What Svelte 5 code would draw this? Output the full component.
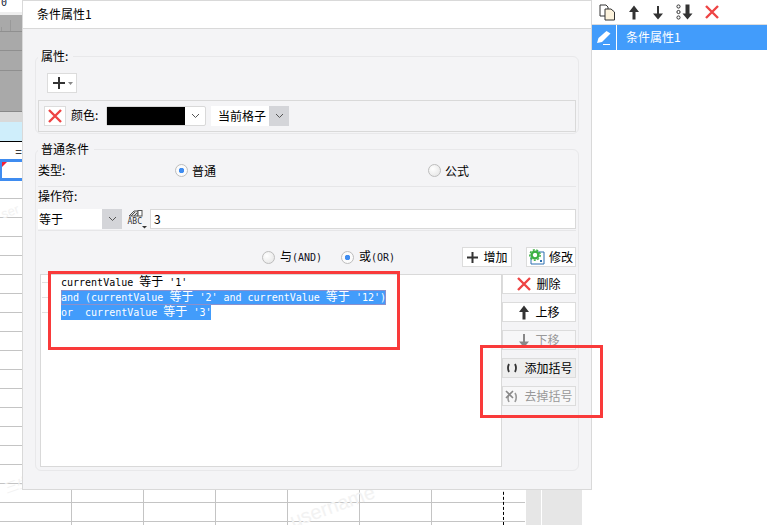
<script>
  let rows = [
    { icon: 'x', label: '删除' },
    { icon: 'up', label: '上移' },
    { icon: 'down', label: '下移', off: true },
    { icon: 'paren', label: '添加括号', hover: true },
    { icon: 'unparen', label: '去掉括号', off: true }
  ];
</script>

{#snippet arrowUp(c)}
  <svg width="12" height="15" viewBox="0 0 12 15"><path d="M6 0.5 L11 7 H7.5 V14.5 H4.5 V7 H1 Z" fill={c} /></svg>
{/snippet}
{#snippet arrowDown(c)}
  <svg width="12" height="15" viewBox="0 0 12 15"><path d="M6 14.5 L11 8.5 H7 V1 H5 V8.5 H1 Z" fill={c} /></svg>
{/snippet}
{#snippet redX(s)}
  <svg width={s} height={s} viewBox="0 0 14 14"><path d="M1 1 L13 13 M13 1 L1 13" stroke="#ee4444" stroke-width="2.4" fill="none" /></svg>
{/snippet}
{#snippet chevron()}
  <svg width="9" height="6" viewBox="0 0 9 6"><path d="M1 1 L4.5 4.5 L8 1" stroke="#555" fill="none" /></svg>
{/snippet}

<div class="page">
  <div class="sheet">
    <div class="s-top">0</div>
    <div class="s-ruler"></div>
    <div class="s-pale"></div>
    <div class="s-blue"></div>
    <div class="s-head">=</div>
    <div class="s-cell"><span class="flag"></span></div>
    <div class="s-grid">
      <div class="cells"></div>
      <div class="cells-b"></div>
      <div class="col-a"></div>
      <div class="col-b"></div>
    </div>
    <span class="mark m1">ser</span>
    <span class="mark m2">三生</span>
    <span class="mark m3">username</span>
  </div>

  <aside class="panel">
    <div class="tools">
      <svg width="17" height="17" viewBox="0 0 17 17">
        <path d="M1 1 H7 L9 3 V12 H1 Z" fill="#fff" stroke="#333" />
        <path d="M6 5 H12 L15.5 8 V16 H6 Z" fill="#fdf3dc" stroke="#333" />
      </svg>
      {@render arrowUp('#333')}
      {@render arrowDown('#333')}
      <svg width="17" height="16" viewBox="0 0 17 16">
        <circle cx="2.5" cy="2.5" r="1.6" fill="none" stroke="#333" />
        <circle cx="2.5" cy="8" r="1.6" fill="none" stroke="#333" />
        <circle cx="2.5" cy="13.5" r="1.6" fill="none" stroke="#333" />
        <path d="M11.5 15.5 L16.5 9.5 H13.5 V0.5 H9.5 V9.5 H6.5 Z" fill="#333" />
      </svg>
      {@render redX(14)}
    </div>
    <div class="picked">
      <span class="pen">
        <svg width="16" height="16" viewBox="0 0 16 16">
          <path d="M1 13 L2.5 8 L10.5 1 L14.5 3.5 L6 12 Z" fill="#fff" />
          <path d="M7 14.5 H14" stroke="#fff" />
        </svg>
      </span>
      <span class="picked-name">条件属性1</span>
    </div>
  </aside>

  <section class="dialog">
    <header class="title">条件属性1</header>
    <div class="body">
      <fieldset class="group">
        <legend>属性:</legend>
        <button class="add-btn">
          <svg width="14" height="14" viewBox="0 0 14 14"><path d="M7 1 V13 M1 7 H13" stroke="#333" stroke-width="2" /></svg>
          <svg width="5" height="3" viewBox="0 0 5 3"><path d="M0 0 H5 L2.5 3 Z" fill="#888" /></svg>
        </button>
        <div class="attr-row">
          <button class="x-btn">{@render redX(14)}</button>
          <span class="attr-label">颜色:</span>
          <div class="color-box">
            <span class="swatch"></span>
            <span class="color-arrow">{@render chevron()}</span>
          </div>
          <div class="select scope">
            <span class="select-text">当前格子</span>
            <span class="select-arrow">{@render chevron()}</span>
          </div>
        </div>
      </fieldset>

      <fieldset class="group second">
        <legend>普通条件</legend>
        <div class="type-row">
          <span>类型:</span>
          <label class="radio"><i class="dot on"></i>普通</label>
          <label class="radio"><i class="dot"></i>公式</label>
        </div>
        <div class="op-label">操作符:</div>
        <div class="op-row">
          <div class="select op">
            <span class="select-text">等于</span>
            <span class="select-arrow">{@render chevron()}</span>
          </div>
          <svg class="abc" width="20" height="20" viewBox="0 0 20 20">
            <path d="M2 7 L7 2 H11 V7 Z" fill="#ddd" stroke="#555" />
            <path d="M4 7 L8 3 M7 7 L10 4" stroke="#555" />
            <rect x="11" y="1.5" width="4" height="5.5" fill="#fff" stroke="#555" />
            <text x="0.5" y="15" class="abc-text">ABC</text>
            <path d="M15 17 H20 L17.5 19.5 Z" fill="#333" />
          </svg>
          <div class="value">3</div>
        </div>
        <div class="logic-row">
          <label class="radio"><i class="dot"></i><span>与<span class="latin">(AND)</span></span></label>
          <label class="radio"><i class="dot on"></i><span>或<span class="latin">(OR)</span></span></label>
          <button class="btn small">
            <svg width="13" height="13" viewBox="0 0 13 13"><path d="M6.5 1 V12 M1 6.5 H12" stroke="#333" stroke-width="2" /></svg>
            增加
          </button>
          <button class="btn small">
            <svg width="16" height="16" viewBox="0 0 16 16">
              <path d="M4 3 H15 V15 H2 V8" fill="none" stroke="#2a6fb0" />
              <circle cx="6" cy="6" r="3.4" fill="none" stroke="#3cb043" stroke-width="2.4" />
              <circle cx="6" cy="6" r="5.2" fill="none" stroke="#3cb043" stroke-width="1.4" stroke-dasharray="2 1.6" />
              <rect x="11" y="11" width="2" height="2" fill="#2a6fb0" />
            </svg>
            修改
          </button>
        </div>
        <div class="list-row">
          <div class="list">
            <div class="line"><span class="tick"></span><span class="txt">currentValue <b>等于</b> '1'</span></div>
            <div class="line"><span class="tick"></span><span class="txt sel outlined">and (currentValue <b>等于</b> '2' and currentValue <b>等于</b> '12') </span></div>
            <div class="line"><span class="tick"></span><span class="txt sel">or  currentValue <b>等于</b> '3' </span></div>
          </div>
          <div class="side">
            {#each rows as r}
              <button class="btn" class:off={r.off} class:hover={r.hover}>
                {#if r.icon === 'x'}
                  {@render redX(14)}
                {:else if r.icon === 'up'}
                  {@render arrowUp('#333')}
                {:else if r.icon === 'down'}
                  {@render arrowDown('#888')}
                {:else if r.icon === 'paren'}
                  <svg width="14" height="12" viewBox="0 0 14 12"><path d="M4 2 Q2 6 4 10 M10 2 Q12 6 10 10" fill="none" stroke="#333" stroke-width="1.8" /></svg>
                {:else}
                  <svg width="14" height="13" viewBox="0 0 14 13">
                    <path d="M10 3 Q12.5 7 10 12 M4 5 Q2 8 4 12" fill="none" stroke="#999" stroke-width="1.6" />
                    <path d="M1 1 L8 8 M8 1 L1 8" stroke="#888" stroke-width="1.6" />
                  </svg>
                {/if}
                {r.label}
              </button>
            {/each}
          </div>
        </div>
      </fieldset>
    </div>
  </section>

  <div class="note note-a"></div>
  <div class="note note-b"></div>
</div>

<style>
  :global(body) {
    margin: 0;
    background: #fff;
  }

  .page {
    position: relative;
    display: flex;
    width: 767px;
    height: 525px;
    overflow: hidden;
    font-family: "Noto Sans CJK SC", "Liberation Sans", sans-serif;
    font-size: 12px;
    color: #000;
  }

  /* spreadsheet behind the dialog */
  .sheet {
    position: relative;
    width: 592px;
    height: 525px;
    overflow: hidden;
    display: flex;
    flex-direction: column;
  }
  .s-top {
    height: 12px;
    font: 10px/6px "DejaVu Sans Mono", monospace;
    padding-left: 1px;
    color: #123;
    border-bottom: 3px solid #eeeeee;
  }
  .s-ruler {
    height: 96px;
    border-bottom: 1px solid #888;
    background:
      linear-gradient(#8f8f8f, #8f8f8f) 0 16px / 100% 1px no-repeat,
      linear-gradient(#8f8f8f, #8f8f8f) 0 35px / 100% 1px no-repeat,
      linear-gradient(#8f8f8f, #8f8f8f) 0 55px / 100% 1px no-repeat,
      linear-gradient(#999, #999) 1px 12px / 1px 4px no-repeat,
      linear-gradient(#999, #999) 10px 5px / 1px 11px no-repeat,
      #a9a9a9;
  }
  .s-pale {
    height: 10px;
    background: #d9d9d9;
  }
  .s-blue {
    height: 19px;
    background: #cfeefb;
  }
  .s-head {
    height: 17px;
    border-top: 1px solid #000;
    width: 22px;
    text-align: right;
    line-height: 17px;
  }
  .s-cell {
    height: 16px;
    width: 590px;
    border: 3px solid #3f8cf0;
    border-width: 3px 2px;
    position: relative;
  }
  .flag {
    position: absolute;
    left: 0;
    top: 0;
    border-top: 5px solid #f2203a;
    border-right: 5px solid transparent;
  }
  .s-grid {
    display: flex;
    flex: 1;
    margin-top: -1px;
  }
  .cells {
    width: 503px;
    flex: none;
    border-right: 1px dashed #000;
    background-image:
      repeating-linear-gradient(to bottom, transparent 0 18px, #c4c4c4 18px 19px),
      repeating-linear-gradient(to right, transparent 0 71px, #c4c4c4 71px 72px);
  }
  .cells-b {
    width: 21px;
    flex: none;
    background-image: repeating-linear-gradient(to bottom, transparent 0 18px, #c4c4c4 18px 19px);
  }
  .col-a {
    width: 15px;
    margin-left: 1px;
    background: #e6e6e6;
  }
  .col-b {
    width: 40px;
    margin-left: 1px;
    background: #e6e6e6;
  }
  .mark {
    position: absolute;
    color: #f2f2f2;
    font-family: "Liberation Sans", sans-serif;
    font-size: 13px;
    transform: rotate(-20deg);
  }
  .m1 { left: 1px; top: 204px; }
  .m2 { left: 5px; top: 476px; }
  .m3 { left: 288px; top: 495px; font-size: 20px; }

  /* right list panel */
  .panel {
    flex: 1;
    background: #fff;
  }
  .tools {
    height: 24px;
    border-bottom: 1px solid #dddddd;
    display: flex;
    align-items: center;
    gap: 12px;
    padding-left: 7px;
  }
  .picked {
    height: 25px;
    display: flex;
    background: #429cfb;
    color: #fff;
  }
  .pen {
    width: 24px;
    border-right: 1px solid #fff;
    display: flex;
    align-items: center;
    justify-content: center;
  }
  .picked-name {
    margin-left: 9px;
    line-height: 24px;
  }

  /* dialog window */
  .dialog {
    position: absolute;
    left: 22px;
    top: 0;
    width: 570px;
    height: 490px;
    box-sizing: border-box;
    border: 1px solid #d9d9d9;
    background: #f4f4f6;
    display: flex;
    flex-direction: column;
  }
  .title {
    height: 27px;
    flex: none;
    background: #fff;
    border-bottom: 1px solid #d9d9d9;
    padding-left: 14px;
    line-height: 26px;
  }
  .body {
    padding: 19px 0 0 12px;
  }

  fieldset.group {
    margin: 0;
    width: 544px;
    box-sizing: border-box;
    padding: 0 2px 1px 2px;
    border: 1px solid #e8e8ea;
    border-radius: 6px;
  }
  .second {
    margin-top: 7px !important;
    padding-bottom: 3px !important;
  }
  legend {
    margin-left: 0;
    padding: 0 5px 0 3px;
    line-height: 16px;
    height: 16px;
  }

  button {
    font: inherit;
    color: inherit;
    margin: 0;
    padding: 0;
  }
  .add-btn {
    display: flex;
    align-items: center;
    justify-content: center;
    gap: 2px;
    width: 30px;
    height: 20px;
    margin: 9px 0 7px 9px;
    background: #fff;
    border: 1px solid #dcdcdc;
  }
  .attr-row {
    height: 32px;
    box-sizing: border-box;
    border: 1px solid #d9d9d9;
    display: flex;
    align-items: center;
    padding-left: 5px;
  }
  .x-btn {
    width: 22px;
    height: 20px;
    background: #fff;
    border: 1px solid #dcdcdc;
    display: flex;
    align-items: center;
    justify-content: center;
  }
  .attr-label {
    margin: 0 0 2px 5px;
    width: 35px;
    line-height: 16px;
  }
  .color-box {
    width: 100px;
    height: 20px;
    box-sizing: border-box;
    display: flex;
    background: #fff;
    border: 1px solid #d9d9d9;
    border-radius: 2px;
  }
  .swatch {
    width: 78px;
    background: #000;
  }
  .color-arrow {
    flex: 1;
    display: flex;
    align-items: center;
    justify-content: center;
  }
  .select {
    height: 20px;
    display: flex;
    background: #fff;
    box-sizing: border-box;
    line-height: 19px;
  }
  .select-text {
    flex: 1;
    padding-left: 1px;
  }
  .select-arrow {
    width: 20px;
    background: #d4d5d9;
    display: flex;
    align-items: center;
    justify-content: center;
  }
  .scope {
    width: 78px;
    margin-left: 5px;
  }
  .scope .select-text {
    padding-left: 7px;
  }

  .type-row {
    height: 24px;
    padding-top: 5px;
    border-bottom: 1px solid #e6e6e8;
    display: grid;
    grid-template-columns: 137px 253px 1fr;
    grid-auto-rows: 16px;
    line-height: 15px;
  }
  .radio {
    display: flex;
    align-items: center;
    gap: 4px;
    line-height: 15px;
  }
  .dot {
    width: 13px;
    height: 13px;
    flex: none;
    box-sizing: border-box;
    border-radius: 50%;
    border: 1px solid #bdbdbd;
    background: radial-gradient(circle at 35% 35%, #ffffff, #e2e2e2);
  }
  .dot.on {
    background: radial-gradient(circle, #3f8cf0 0 2.5px, #fbfbfb 3px);
  }
  .latin {
    font: 10px/16px "DejaVu Sans Mono", monospace;
    color: #112;
  }
  .op-label {
    height: 22px;
    line-height: 18px;
  }
  .op-row {
    display: flex;
    height: 21px;
    border-bottom: 1px solid #e6e6e8;
  }
  .op {
    width: 84px;
  }
  .abc {
    margin-left: 5px;
    flex: none;
  }
  .abc-text {
    font: 8px "DejaVu Sans Mono", monospace;
    fill: #333;
  }
  .value {
    margin-left: 3px;
    flex: 1;
    height: 20px;
    box-sizing: border-box;
    background: #fff;
    border: 1px solid #d9d9d9;
    padding-left: 3px;
    line-height: 18px;
  }

  .logic-row {
    margin-top: 16px;
    display: flex;
    height: 20px;
  }
  .logic-row .radio:first-child {
    margin-left: 224px;
    width: 79px;
    gap: 5px;
  }
  .logic-row .radio:nth-child(2) {
    width: 121px;
    gap: 5px;
  }
  .logic-row .btn:nth-child(3) {
    width: 50px;
    margin-right: 14px;
  }
  .logic-row .btn:nth-child(4) {
    width: 50px;
  }
  .btn {
    height: 20px;
    box-sizing: border-box;
    background: #fff;
    border: 1px solid #dcdcdc;
    display: flex;
    align-items: center;
    justify-content: center;
    gap: 5px;
    line-height: 18px;
    white-space: nowrap;
  }
  .btn.small {
    gap: 4px;
  }
  .btn.off {
    color: #999;
    background: #f7f7f8;
  }
  .btn.hover {
    background: #eeeeee;
  }

  .list-row {
    display: flex;
    margin: 7px 0 0 2px;
    height: 193px;
  }
  .list {
    width: 462px;
    box-sizing: border-box;
    background: #fff;
    border: 1px solid #d9d9d9;
  }
  .line {
    display: flex;
    height: 15px;
    align-items: flex-start;
  }
  .tick {
    width: 9px;
    height: 1px;
    margin: 7px 10px 0 1px;
    background: #e2e2e2;
  }
  .txt {
    font: 10px/12px "DejaVu Sans Mono", monospace;
    white-space: pre;
    height: 15px;
  }
  .txt b {
    font: 12px/12px "Noto Sans CJK SC", sans-serif;
  }
  .sel {
    background: #429cfb;
    color: #fff;
  }
  .outlined {
    box-shadow: inset 0 0 0 1px #8c90cc;
  }
  .side {
    width: 74px;
    display: flex;
    flex-direction: column;
    gap: 8px;
  }

  /* red annotation boxes */
  .note {
    position: absolute;
    box-sizing: border-box;
    border: 3px solid #f93a3a;
  }
  .note-a {
    left: 48px;
    top: 271px;
    width: 352px;
    height: 79px;
  }
  .note-b {
    left: 480px;
    top: 345px;
    width: 123px;
    height: 73px;
  }
</style>
